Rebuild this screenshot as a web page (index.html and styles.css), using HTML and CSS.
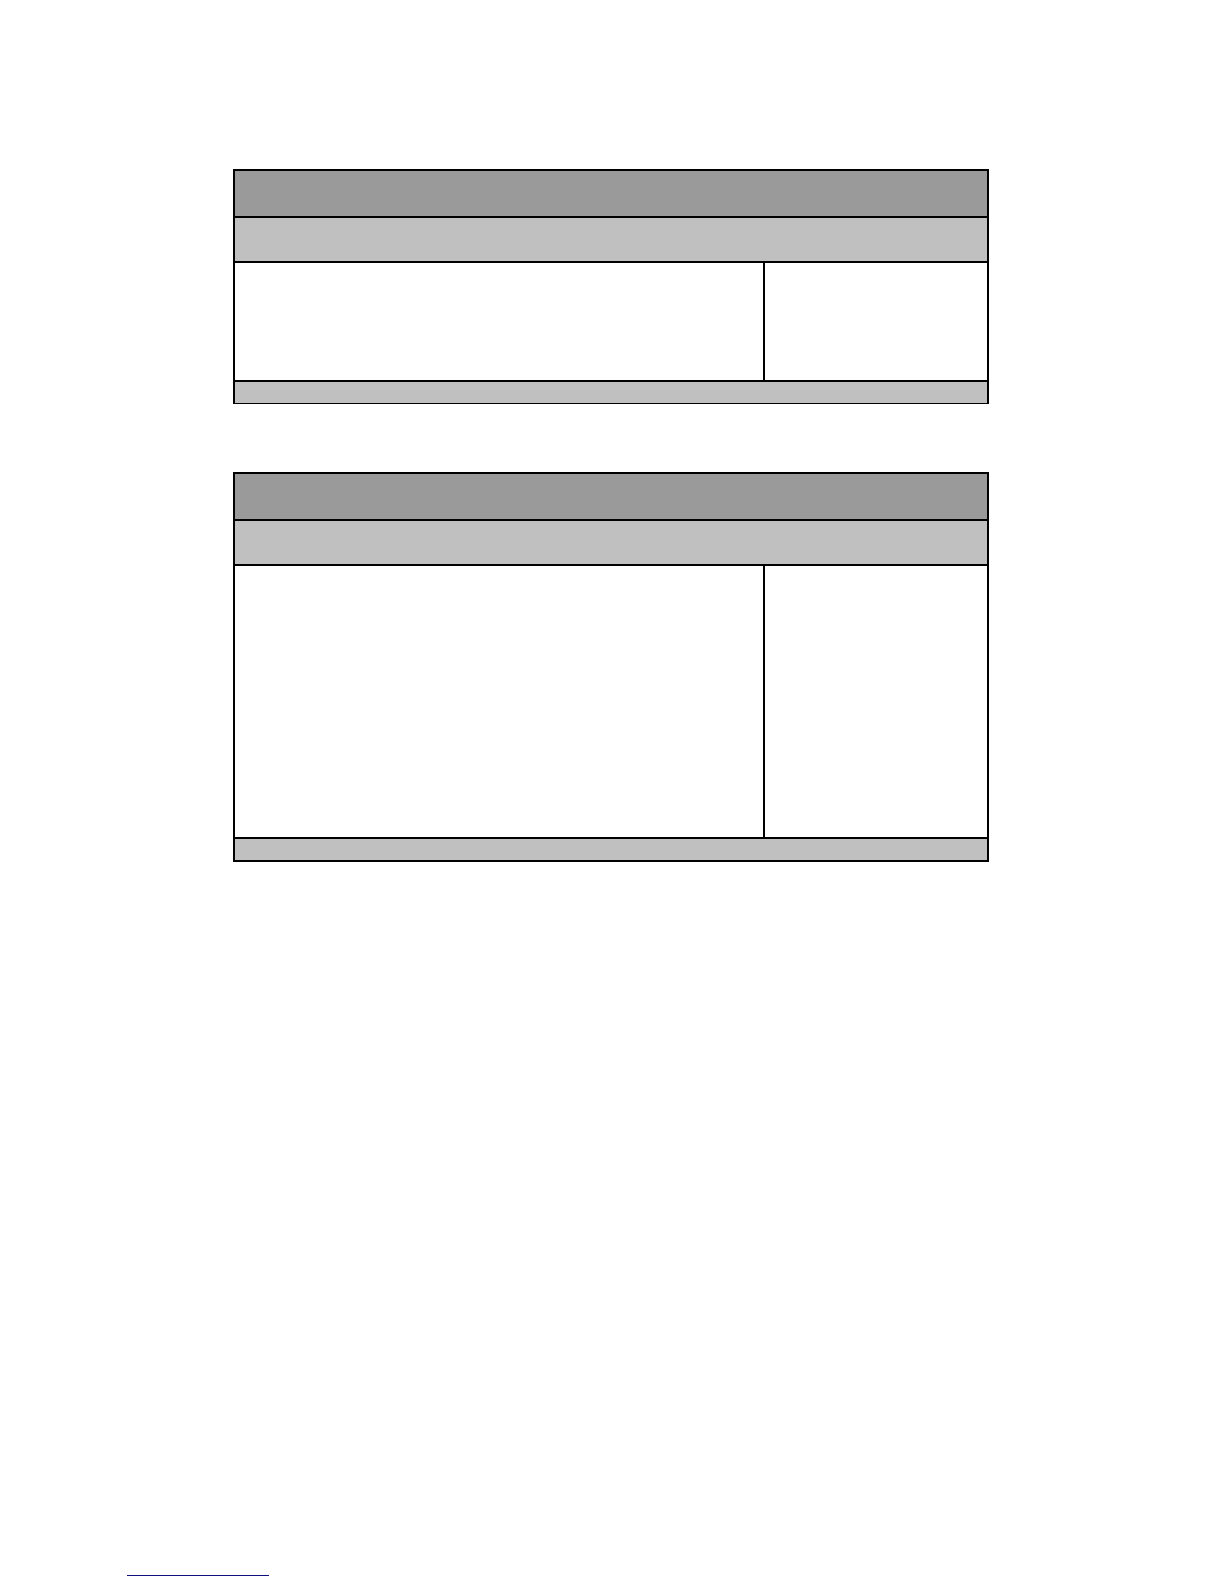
FILE: index.html
```html
<!DOCTYPE html>
<html lang="en">
<head>
    <meta charset="UTF-8">
    <meta name="viewport" content="width=device-width, initial-scale=1.0">
    <title>Document</title>
    <link rel="stylesheet" href="styles.css">
</head>
<body>

    <main class="page">
        <div class="tables">
            <table class="form-table form-table-short">
                <colgroup>
                    <col class="col-main">
                    <col class="col-side">
                </colgroup>
                <tbody>
                    <tr class="title-row"><td colspan="2"></td></tr>
                    <tr class="subtitle-row"><td colspan="2"></td></tr>
                    <tr class="body-row"><td></td><td></td></tr>
                    <tr class="footer-row"><td colspan="2"></td></tr>
                </tbody>
            </table>

            <table class="form-table form-table-tall">
                <colgroup>
                    <col class="col-main">
                    <col class="col-side">
                </colgroup>
                <tbody>
                    <tr class="title-row"><td colspan="2"></td></tr>
                    <tr class="subtitle-row"><td colspan="2"></td></tr>
                    <tr class="body-row"><td></td><td></td></tr>
                    <tr class="footer-row"><td colspan="2"></td></tr>
                </tbody>
            </table>
        </div>

        <hr class="page-rule">
    </main>

</body>
</html>
```

FILE: styles.css
```css
* {
    box-sizing: border-box;
}
body {
    margin: 0;
    background-color: #fff;
    font-family: "Liberation Sans", Arial, sans-serif;
}
.page {
    display: flex;
    flex-direction: column;
    min-height: 100vh;
    padding: 169px 127px 8px;
}
.tables {
    display: flex;
    flex-direction: column;
    gap: 68px;
    padding: 0 108px 0 106px;
}
.form-table {
    width: 100%;
    table-layout: fixed;
    border-collapse: collapse;
}
.form-table td {
    padding: 0;
    border: 2px solid #000;
}
.col-main {
    width: 70.3%;
}
.title-row td {
    height: 47px;
    background-color: #9a9a9a;
}
.subtitle-row td {
    height: 45px;
    background-color: #c0c0c0;
}
.footer-row td {
    height: 23px;
    background-color: #c0c0c0;
}
.form-table-short .body-row td {
    height: 119px;
}
.form-table-tall .body-row td {
    height: 273px;
}
.form-table-short .footer-row td {
    height: 22px;
    border-bottom-width: 1px;
}
.page-rule {
    width: 142px;
    margin: auto 0 0;
    border: 0;
    border-top: 1px solid #10107c;
}
```
